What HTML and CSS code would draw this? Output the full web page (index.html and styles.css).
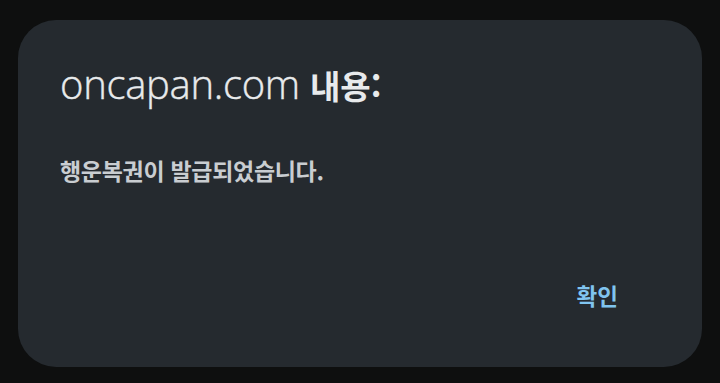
FILE: index.html
```html
<!DOCTYPE html>
<html lang="ko">
<head>
<meta charset="utf-8">
<link rel="stylesheet" href="styles.css">
<title>oncapan.com</title>
</head>
<body>
    <div class="dialog">
        <div class="dialog-title">oncapan.com <b>내용:</b></div>
        <div class="dialog-message">행운복권이 발급되었습니다.</div>
        <div class="dialog-buttons">
            <span class="ok-button">확인</span>
        </div>
    </div>
</body>
</html>
```

FILE: styles.css
```css
html, body {
    margin: 0;
    height: 100%;
}

body {
    background: #0e0f0f;
    padding: 20px 18px 16px 18px;
    box-sizing: border-box;
    font-family: "Open Sans", "Noto Sans CJK KR", sans-serif;
}

.dialog {
    height: 100%;
    background: #252a2f;
    border-radius: 38px;
    padding: 39px 42px 0 42px;
    box-sizing: border-box;
    display: flex;
    flex-direction: column;
}

.dialog-title {
    font-size: 40px;
    font-weight: 300;
    color: #e8eaec;
    line-height: 50px;
    letter-spacing: -0.3px;
    -webkit-text-stroke: 0.4px #e8eaec;
}

.dialog-title b {
    font-family: "Noto Sans CJK KR", sans-serif;
    font-weight: 700;
    font-size: 33px;
    letter-spacing: 0;
    -webkit-text-stroke: 0;
}

.dialog-message {
    margin-top: 45px;
    font-family: "Noto Sans CJK KR", sans-serif;
    font-weight: 700;
    font-size: 23px;
    color: #c9cdd1;
    line-height: 30px;
    letter-spacing: -0.3px;
}

.dialog-buttons {
    margin-top: 95px;
    display: flex;
    justify-content: flex-end;
    padding-right: 42px;
}

.ok-button {
    font-family: "Noto Sans CJK KR", sans-serif;
    font-weight: 700;
    font-size: 22.5px;
    color: #80c4ef;
    line-height: 30px;
}
```
